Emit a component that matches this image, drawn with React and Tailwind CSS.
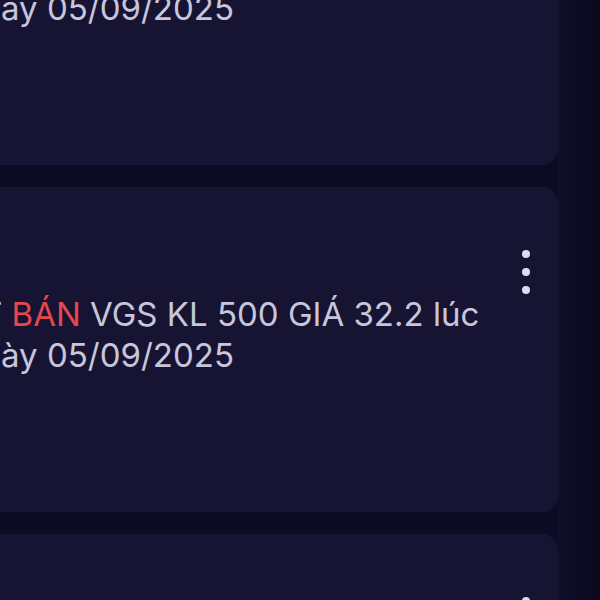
import React from "react";

function Dots() {
  return (
    <div className="flex flex-col gap-[10px] mt-[63px] shrink-0">
      <span className="block w-[8px] h-[8px] rounded-full bg-[#dcdcef]" />
      <span className="block w-[8px] h-[8px] rounded-full bg-[#dcdcef]" />
      <span className="block w-[8px] h-[8px] rounded-full bg-[#dcdcef]" />
    </div>
  );
}

function Card({ side, qty, price, time, date }) {
  return (
    <div className="h-[325px] shrink-0 rounded-[16px] bg-[#161432] flex justify-between pr-[28px]">
      <div className="pl-[51px] pt-[107px] text-[33px] leading-[41px] text-[#c7c6db] whitespace-nowrap font-['Inter',sans-serif]">
        <div>
          Lệnh ĐẶT <span className="text-[#e5474d]">{side}</span> VGS KL {qty} GIÁ {price} lúc
        </div>
        <div>
          <span className="pr-[8px]">{time}</span> ngày {date}
        </div>
      </div>
      <Dots />
    </div>
  );
}

export default function App() {
  return (
    <div className="w-[600px] h-[600px] overflow-hidden bg-[#0d0b24] flex">
      <div className="w-[558px] shrink-0 overflow-visible">
        <div className="w-[758px] -ml-[200px] -mt-[160px] flex flex-col gap-[22px]">
          <Card side="BÁN" qty="500" price="32.2" time="09h15" date="05/09/2025" />
          <Card side="BÁN" qty="500" price="32.2" time="09h15" date="05/09/2025" />
          <Card side="BÁN" qty="500" price="32.2" time="09h15" date="05/09/2025" />
        </div>
      </div>
      <div className="flex-1 bg-gradient-to-r from-[#100e2a] to-[#0a091c]" />
    </div>
  );
}
